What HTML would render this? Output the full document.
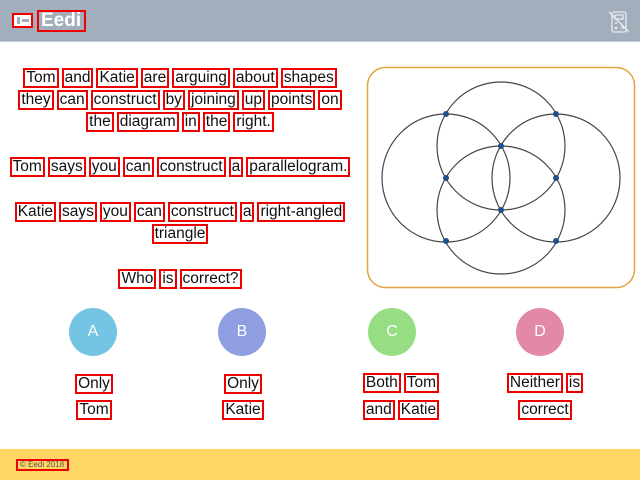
<!DOCTYPE html>
<html><head><meta charset="utf-8"><style>
*{margin:0;padding:0;box-sizing:border-box}
body{width:640px;height:480px;position:relative;background:#fff;font-family:"Liberation Sans",sans-serif;overflow:hidden}
.hdr{position:absolute;left:0;top:0;width:640px;height:42px;background:#a2aebb;border-bottom:1px solid #c4ccd4}
.ftr{position:absolute;left:0;top:449px;width:640px;height:31px;background:#fdd663}
.ln{position:absolute;left:0;width:360px;text-align:center;font-size:15.5px;color:#111;white-space:nowrap}
.ln span,.op span{display:inline-block;border:2px solid #e00;line-height:16px;padding:0 1px;margin:0 1.5px}
.op{position:absolute;width:140px;text-align:center;font-size:15.5px;color:#111;white-space:nowrap}
.c{position:absolute;width:48px;height:48px;border-radius:50%;color:#fff;font-size:16px;text-align:center;line-height:48px}
</style></head><body>
<div class="hdr"></div>
<div style="position:absolute;left:12px;top:13px;width:21px;height:15px;border:2px solid #e00;background:#fff"><div style="position:absolute;left:3px;top:2px;width:3px;height:7px;background:#a2aebb"></div><div style="position:absolute;left:8px;top:4px;width:7px;height:3px;background:#a2aebb"></div></div>
<div style="position:absolute;left:37px;top:10px;height:22px;width:49px;border:2px solid #e00;color:#fff;font-weight:bold;font-size:19px;line-height:18px;padding-left:2px">Eedi</div>
<svg style="position:absolute;left:607px;top:10px" width="24" height="24" viewBox="0 0 24 24" fill="none" stroke="#e8ecf0" stroke-width="1.3"><rect x="5" y="2" width="14" height="20" rx="2"/><rect x="8" y="5" width="8" height="4"/><path d="M8 13h2M9 12v2M8 17l2 2M10 17l-2 2M14 16h3M14 18h3M2 2l20 20"/></svg>

<div class="ln" style="top:68px"><span>Tom</span><span>and</span><span>Katie</span><span>are</span><span>arguing</span><span>about</span><span>shapes</span></div>
<div class="ln" style="top:90px"><span>they</span><span>can</span><span>construct</span><span>by</span><span>joining</span><span>up</span><span>points</span><span>on</span></div>
<div class="ln" style="top:112px"><span>the</span><span>diagram</span><span>in</span><span>the</span><span>right.</span></div>
<div class="ln" style="top:157px"><span>Tom</span><span>says</span><span>you</span><span>can</span><span>construct</span><span>a</span><span>parallelogram.</span></div>
<div class="ln" style="top:202px"><span>Katie</span><span>says</span><span>you</span><span>can</span><span>construct</span><span>a</span><span>right-angled</span></div>
<div class="ln" style="top:224px"><span>triangle</span></div>
<div class="ln" style="top:269px"><span>Who</span><span>is</span><span>correct?</span></div>

<svg style="position:absolute;left:0;top:0" width="640" height="300">
<rect x="367.5" y="67.5" width="267" height="220" rx="18" fill="#fff" stroke="#e3a340" stroke-width="1.5"/>
<g fill="none" stroke="#444" stroke-width="1.2">
<circle cx="501" cy="146" r="64"/><circle cx="446" cy="178" r="64"/><circle cx="556" cy="178" r="64"/><circle cx="501" cy="210" r="64"/></g>
<g fill="#1f4e8c"><circle cx="446" cy="114" r="3"/><circle cx="556" cy="114" r="3"/><circle cx="501" cy="146" r="3"/><circle cx="446" cy="178" r="3"/><circle cx="556" cy="178" r="3"/><circle cx="501" cy="210" r="3"/><circle cx="446" cy="241" r="3"/><circle cx="556" cy="241" r="3"/></g>
</svg>

<div class="c" style="left:69px;top:308px;background:#73c5e3">A</div>
<div class="c" style="left:218px;top:308px;background:#8f9ee0">B</div>
<div class="c" style="left:368px;top:308px;background:#96dd83">C</div>
<div class="c" style="left:516px;top:308px;background:#e28aa5">D</div>

<div class="op" style="left:24px;top:374px"><span>Only</span></div>
<div class="op" style="left:24px;top:400px"><span>Tom</span></div>
<div class="op" style="left:173px;top:374px"><span>Only</span></div>
<div class="op" style="left:173px;top:400px"><span>Katie</span></div>
<div class="op" style="left:331px;top:373px"><span>Both</span><span>Tom</span></div>
<div class="op" style="left:331px;top:400px"><span>and</span><span>Katie</span></div>
<div class="op" style="left:475px;top:373px"><span>Neither</span><span>is</span></div>
<div class="op" style="left:475px;top:400px"><span>correct</span></div>

<div class="ftr"></div>
<div style="position:absolute;left:16px;top:459px;width:53px;height:12px;border:2px solid #e00;font-size:8px;line-height:8px;color:#555;padding-left:2px">© Eedi 2018</div>
</body></html>
